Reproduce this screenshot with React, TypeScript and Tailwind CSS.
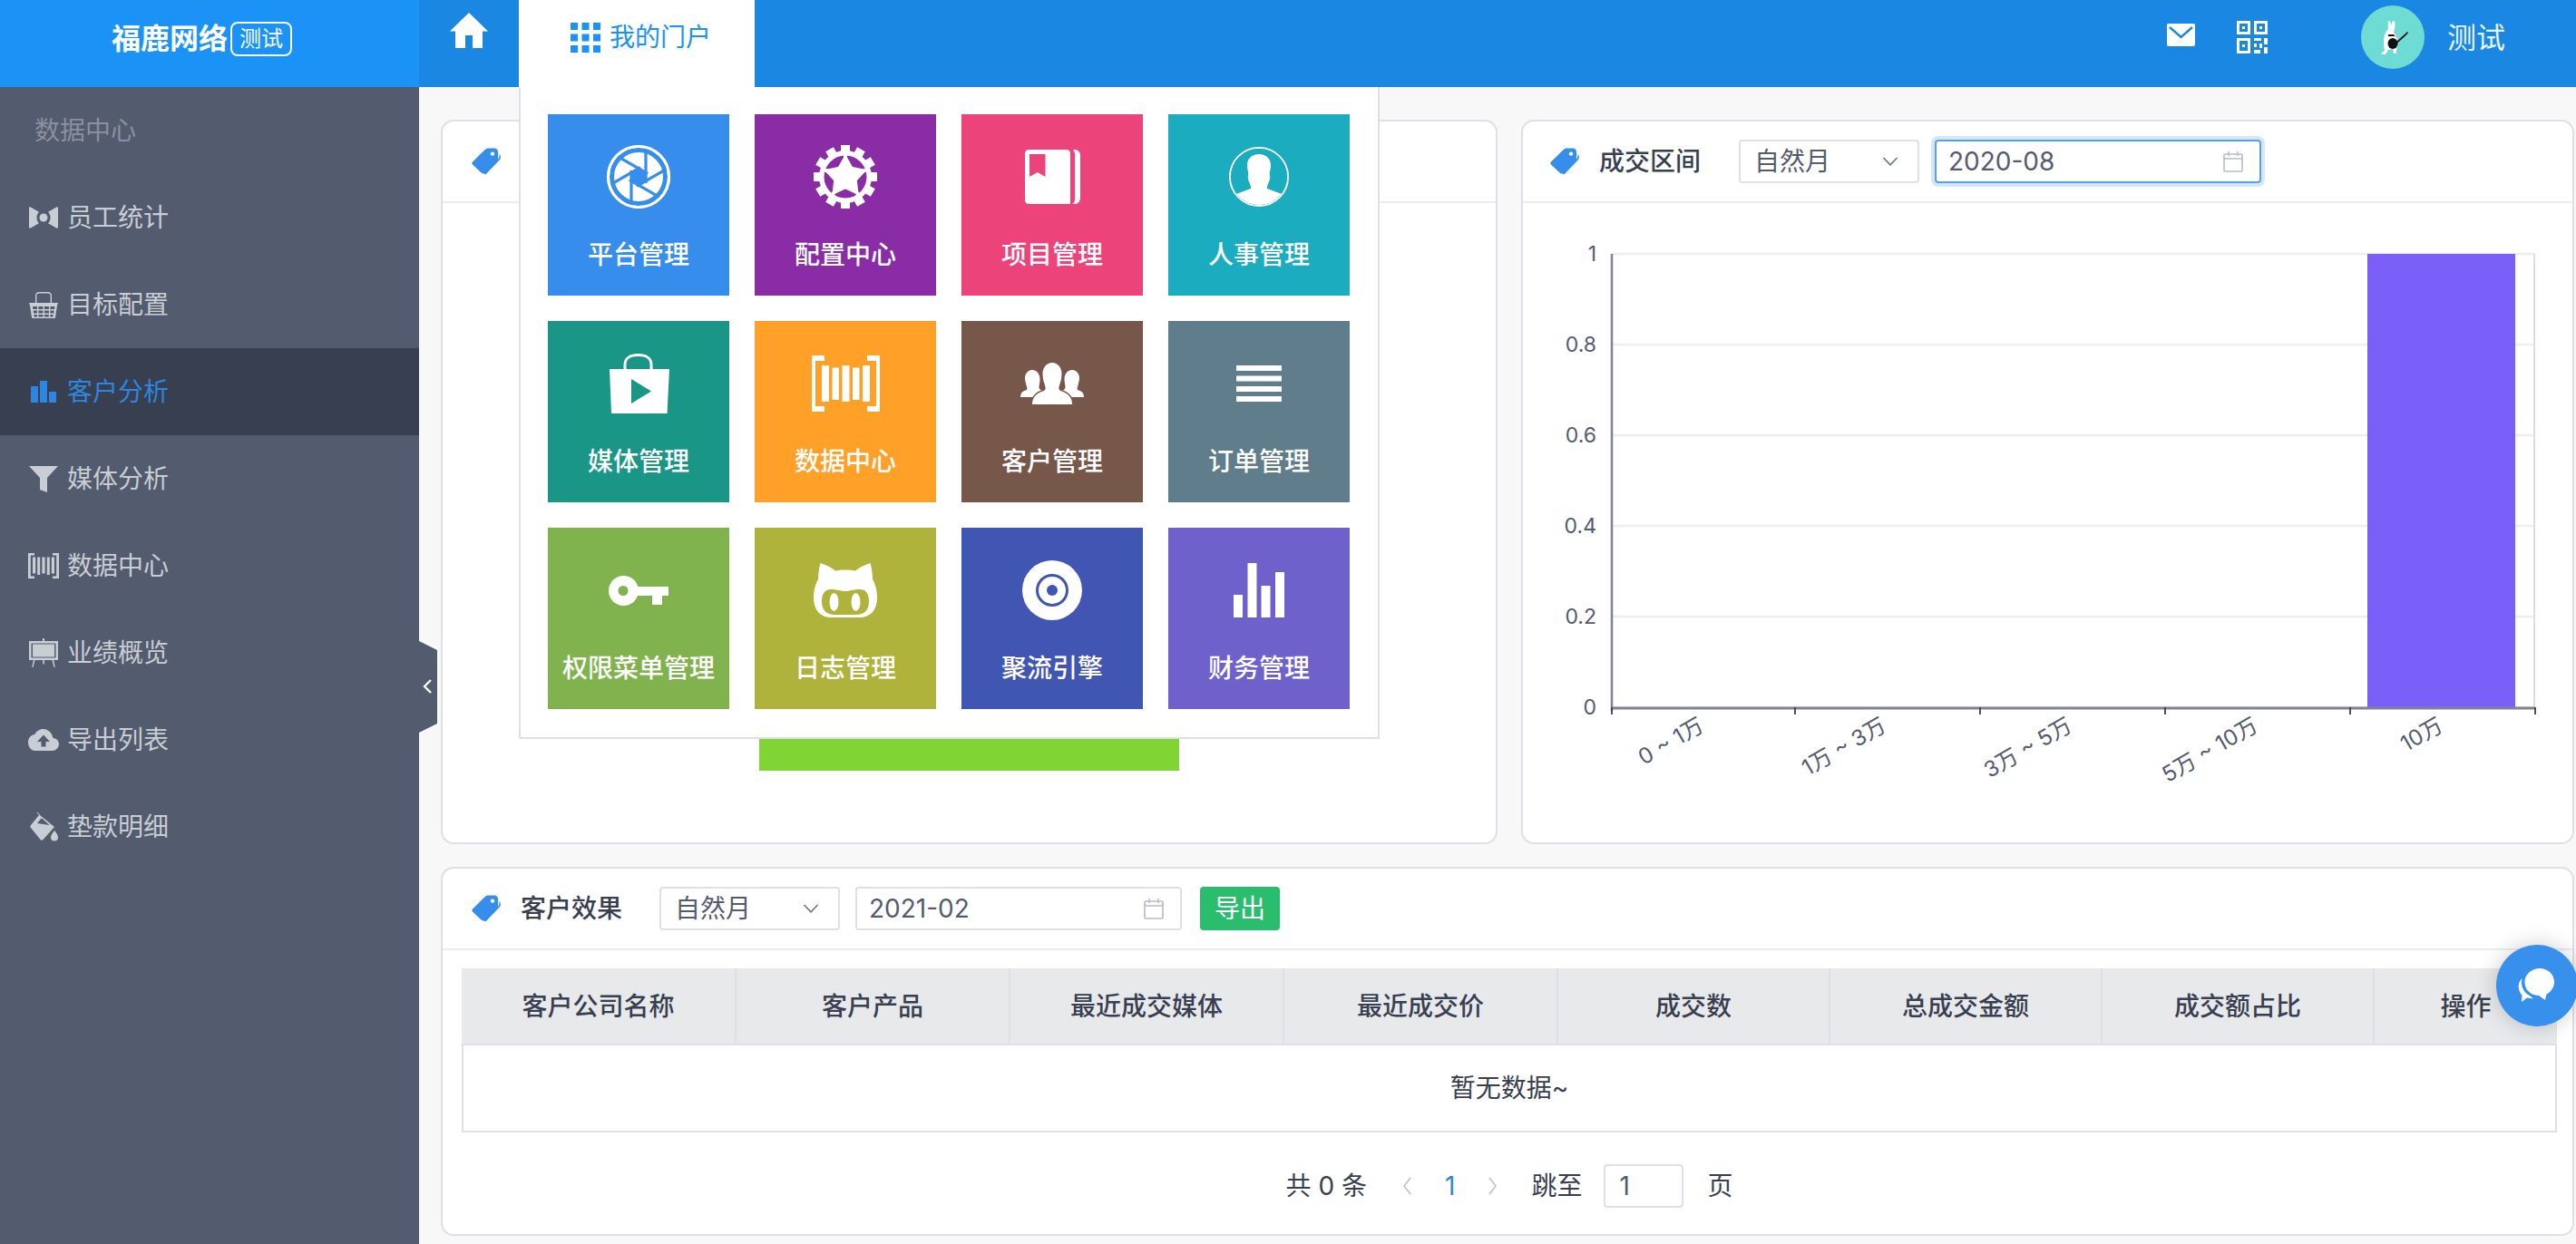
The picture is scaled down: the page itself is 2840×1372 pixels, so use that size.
import React from "react";

const FONT = "font-['Inter','Noto_Sans_CJK_SC',sans-serif]";

const Tag = () => (
  <svg viewBox="0 0 32 30" className="w-[32px] h-[30px] shrink-0">
    <path d="M1 15.5 14.5 2.2C15.6 1.1 17 .6 18.5.6h6.600c2.300 0 4 1.700 4 4v7.400c0 1.200-.5 2.300-1.300 3.100L15.600 27.400c-1.500 1.500-3.500 1.500-5 0L1 18.600c-.9-.9-.9-2.200 0-3.100Z" fill="#368DEB" />
    <circle cx="23" cy="6.600" r="2.200" fill="#fff" />
    <path d="M30.600 7c.9 1 1.300 2 1.300 3.300 0 1.400-.5 2.500-1.500 3.500L15.400 29.600l-2-1.400 15.800-15.600c1-1 1.400-2.600 1.400-5.600Z" fill="#368DEB" />
  </svg>
);

const Chevron = () => (
  <svg viewBox="0 0 18 10" className="w-[18px] h-[10px]" fill="none" stroke="#6b7285" strokeWidth="1.600">
    <path d="M1.500 1 9 8.800 16.500 1" />
  </svg>
);

const Calendar = () => (
  <svg viewBox="0 0 22 24" className="w-[22px] h-[24px]" fill="none" stroke="#b9bcc6" strokeWidth="1.600">
    <rect x="1" y="4" width="20" height="19" rx="1" />
    <path d="M1 9h20M6 1v5M16 1v5" />
  </svg>
);

const Select = () => (
  <div className="w-[199px] h-[48px] shrink-0 flex items-center justify-between pl-[15px] pr-[21px] rounded-[4px] border-2 border-[#dfe0e6] text-[28px] text-[#535b6e]">
    <span>自然月</span>
    <Chevron />
  </div>
);

const DateBox = ({ value, focus }: { value: string; focus?: boolean }) => (
  <div
    className={`w-[360px] h-[48px] shrink-0 flex items-center justify-between pl-[13px] pr-[18px] rounded-[4px] border-2 text-[28px] text-[#535b6e] ${
      focus ? "border-[#5a9fec] shadow-[0_0_0_4px_#d5e7fa]" : "border-[#dfe0e6]"
    }`}
  >
    <span>{value}</span>
    <Calendar />
  </div>
);

const CardHead = ({ title, pad, gap, children }: { title?: string; pad: string; gap: string; children?: React.ReactNode }) => (
  <div className={`h-[90px] shrink-0 flex items-center border-b-2 border-[#ededf0] ${pad}`}>
    <Tag />
    <span className="ml-[22px] text-[28px] font-medium text-[#373f50] w-[112px] shrink-0">{title}</span>
    <div className={`flex items-center gap-[17px] ${gap}`}>{children}</div>
  </div>
);

/* ---------- sidebar icons ---------- */
const SideBowtie = () => (
  <svg viewBox="0 0 32 24" className="w-[32px] h-[24px]" fill="#c9cdd4">
    <path d="M0 1.500C0 .4 1 0 1.800.4L11 5.800c-1.600 1.400-2.500 3.600-2.500 6.200s.9 4.800 2.500 6.200l-9.200 5.400C1 24 0 23.600 0 22.500Z" />
    <path d="M32 1.500c0-1.100-1-1.500-1.800-1.100L21 5.800c1.600 1.400 2.500 3.600 2.500 6.200s-.9 4.800-2.500 6.200l9.200 5.400c.8.400 1.800 0 1.800-1.100Z" />
    <circle cx="16" cy="12" r="4.500" />
  </svg>
);
const SideBasket = () => (
  <svg viewBox="0 0 32 30" className="w-[32px] h-[30px]" fill="#c9cdd4">
    <path d="M7 13V5c0-2.200 1.600-4 4-4h10c2.400 0 4 1.800 4 4v8h-1.400V5c0-1.500-1-2.600-2.600-2.600H11C9.400 2.400 8.400 3.500 8.400 5v8Z" />
    <path fillRule="evenodd" d="M0 13h32l-1 3-2 13c0 .5-.5 1-1 1H4c-.5 0-1-.5-1-1L1 16Zm4 4 .4 3H9v-3Zm6.400 0v3h5v-3Zm6.500 0v3h5v-3Zm6.500 0v3H28l.4-3ZM4.700 21.500l.4 3H9v-3Zm5.700 0v3h5v-3Zm6.500 0v3h5v-3Zm6.500 0v3H27.300l.4-3ZM5.400 26l.3 2.600H9V26Zm5 0v2.600h5V26Zm6.500 0v2.600h5V26Zm6.500 0v2.600H26.400l.3-2.600Z" />
  </svg>
);
const SideBars = () => (
  <svg viewBox="0 0 28 24" className="w-[28px] h-[24px] ml-[2px]" fill="#2f86de">
    <rect x="0" y="6" width="8" height="18" />
    <rect x="10" y="0" width="8" height="24" />
    <rect x="20" y="12" width="8" height="12" />
  </svg>
);
const SideFunnel = () => (
  <svg viewBox="0 0 32 29" className="w-[32px] h-[29px]" fill="#c9cdd4">
    <path d="M0 0h32L20 13v16l-8-3V13Z" />
  </svg>
);
const SideBarcode = () => (
  <svg viewBox="0 0 34 28" className="w-[34px] h-[28px] -ml-[1px]" fill="#c9cdd4">
    <path d="M0 0h7v2.400H2.800v23.200H7V28H0ZM34 0h-7v2.400h4.200v23.200H27V28h7Z" />
    <rect x="5" y="4.500" width="3.200" height="18" />
    <rect x="10.200" y="4.500" width="3" height="19.500" />
    <rect x="15.400" y="4.500" width="3.200" height="18" />
    <rect x="20.800" y="4.500" width="3" height="19.500" />
    <rect x="25.800" y="4.500" width="3.200" height="18" />
  </svg>
);
const SideEasel = () => (
  <svg viewBox="0 0 32 32" className="w-[32px] h-[32px]" fill="#c9cdd4">
    <rect x="15" y="0" width="2" height="3" />
    <path fillRule="evenodd" d="M0 3h32v21H0Zm2.500 2.500v16h27v-16Z" />
    <rect x="4" y="6.500" width="24" height="14" />
    <path d="M5 24h1.600l-2 7.800H3.200ZM25.400 24H27l1.800 7.800h-1.400ZM15.200 24h1.600v4.500h-1.600Z" />
  </svg>
);
const SideCloud = () => (
  <svg viewBox="0 0 34 24" className="w-[34px] h-[24px] -ml-[1px]">
    <path d="M27.500 10C26.400 4.200 21.800 0 16.800 0 12.600 0 9 2.400 7.300 5.900 3 6.400 0 10 0 14.600 0 19.800 3.400 24 7.600 24h18.800C30.600 24 34 20.800 34 16.500c0-3.600-2.800-6.200-6.500-6.500Z" fill="#c9cdd4" />
    <path d="M17 6.500 24 14h-4.500v5.500h-5V14H10Z" fill="#535b6e" />
  </svg>
);
const SideBucket = () => (
  <svg viewBox="0 0 32 32" className="w-[32px] h-[32px]" fill="#c9cdd4">
    <path d="M8.500 0 11 3 2 14c-.8 1-.8 2 0 3l10.500 13c.8 1 2.200 1 3 0L28 16 12.500 3.500l-.1-.1L9.800 0Z" />
    <path d="M9 12l4.800-5.800L22.700 14Z" fill="#535b6e" />
    <path d="M28 20s4 4.500 4 7.500a4 4 0 0 1-8 0c0-3 4-7.500 4-7.500Z" />
  </svg>
);

/* ---------- tile icons ---------- */
const Aperture = ({ c }: { c: string }) => (
  <svg viewBox="0 0 70 70" className="w-[70px] h-[70px]">
    <circle cx="35" cy="35" r="35" fill="#fff" />
    <circle cx="35" cy="35" r="27" fill="#fff" />
    {[0, 60, 120, 180, 240, 300].map((a) => (
      <line key={a} x1="43" y1="42" x2="43" y2="2" stroke={c} strokeWidth="3.200" transform={`rotate(${a} 35 35)`} />
    ))}
    <path d="M35 26 42.800 30.500v9L35 44l-7.800-4.500v-9Z" fill={c} />
    <circle cx="35" cy="35" r="29.500" fill="none" stroke={c} strokeWidth="5" />
    <circle cx="35" cy="35" r="33.500" fill="none" stroke="#fff" strokeWidth="3" />
  </svg>
);

const starPoints = (() => {
  const pts: string[] = [];
  for (let i = 0; i < 10; i++) {
    const r = i % 2 === 0 ? 25 : 13.5;
    const t = (Math.PI / 5) * i - Math.PI / 2;
    pts.push(`${(35 + r * Math.cos(t)).toFixed(2)},${(35 + r * Math.sin(t)).toFixed(2)}`);
  }
  return pts.join(" ");
})();

const Gear = ({ c }: { c: string }) => (
  <svg viewBox="0 0 70 70" className="w-[70px] h-[70px]">
    {[0, 30, 60, 90, 120, 150].map((a) => (
      <rect key={a} x="30" y="0" width="10" height="70" fill="#fff" transform={`rotate(${a} 35 35)`} />
    ))}
    <circle cx="35" cy="35" r="29" fill="#fff" />
    <circle cx="35" cy="35" r="23.500" fill={c} />
    <polygon points={starPoints} fill="#fff" />
    {[0, 72, 144, 216, 288].map((a) => (
      <rect key={a} x="33" y="8" width="4" height="20" fill="#fff" transform={`rotate(${a} 35 35)`} />
    ))}
  </svg>
);
const Notebook = ({ c }: { c: string }) => (
  <svg viewBox="0 0 70 70" className="w-[70px] h-[70px]">
    <path d="M5 9c0-2.200 1.800-4 4-4h42c2.200 0 4 1.800 4 4v56H9c-2.200 0-4-1.800-4-4Z" fill="#fff" />
    <path d="M57 5h3c3.300 0 6 2.700 6 6v48c0 3.300-2.700 6-6 6h-3c2-.8 3-2.500 3-5V10c0-2.500-1-4.200-3-5Z" fill="#fff" />
    <path d="M10 10h17.500v25L18.800 30 10 35Z" fill={c} />
  </svg>
);
const Person = ({ c }: { c: string }) => (
  <svg viewBox="0 0 70 70" className="w-[70px] h-[70px]">
    <circle cx="35" cy="35" r="32" fill="none" stroke="#fff" strokeWidth="2" />
    <clipPath id="person-clip">
      <circle cx="35" cy="35" r="31" />
    </clipPath>
    <g clipPath="url(#person-clip)">
      <rect width="70" height="70" fill={c} />
      <path
        d="M35 10C43 10 48 15 48 22 48 28 46 30 47 34 48 38 45 41 44 46V48L63 55V70H7V55L26 48V46C25 41 22 38 23 34 24 30 22 28 22 22 22 15 27 10 35 10Z"
        fill="#fff"
      />
    </g>
  </svg>
);
const Bag = ({ c }: { c: string }) => (
  <svg viewBox="0 0 70 70" className="w-[70px] h-[70px]">
    <path d="M20 19V14C20 7 26 3.500 34.500 3.500S49 7 49 14V19" fill="none" stroke="#fff" strokeWidth="3" />
    <path d="M3 19h66l-2.500 49H5Z" fill="#fff" />
    <path d="M27 30v27l22-13.500Z" fill={c} />
  </svg>
);
const BarcodeL = () => (
  <svg viewBox="0 0 75 62" className="w-[75px] h-[62px]" fill="#fff">
    <path d="M0 0h14v6H4v50h10v6H0ZM75 0H61v6h10v50H61v6h14Z" />
    <rect x="11" y="11" width="8" height="40" />
    <rect x="22.500" y="13.500" width="7.500" height="35.500" />
    <rect x="33.500" y="11" width="8" height="40" />
    <rect x="45" y="13.500" width="7.500" height="35.500" />
    <rect x="56" y="11" width="8" height="40" />
  </svg>
);
const Group = ({ c }: { c: string }) => {
  const side =
    "M13 8C17.500 8 21.500 12 21.500 18 21.500 22 20.500 25 20.500 27 20.500 29 22 30 24 31V38H0C0 33 3 31 7 30 8 28 7 27 6.500 25 6 22 5 20 5 17 5 12 8.500 8 13 8Z";
  const main =
    "M35 0C41 0 45.500 5 45.500 12 45.500 18 44 22 43 25 42 28 42 29 44 31 50 33 57 36 57 46H13C13 36 20 33 26 31 28 29 28 28 27 25 26 22 24.500 18 24.500 12 24.500 5 29 0 35 0Z";
  return (
    <svg viewBox="0 0 70 46" className="w-[70px] h-[46px]" fill="#fff">
      <path d={side} />
      <path d={side} transform="translate(70 0) scale(-1 1)" />
      <path d={main} stroke={c} strokeWidth="3" paintOrder="stroke" />
    </svg>
  );
};
const Lines = () => (
  <svg viewBox="0 0 50 40" className="w-[50px] h-[40px]" fill="#fff">
    <rect y="0" width="50" height="6" />
    <rect y="11.500" width="50" height="6" />
    <rect y="23" width="50" height="6" />
    <rect y="34" width="50" height="6" />
  </svg>
);
const Key = ({ c }: { c: string }) => (
  <svg viewBox="0 0 66 33" className="w-[66px] h-[33px]">
    <circle cx="16.500" cy="16.500" r="16.500" fill="#fff" />
    <path d="M28 12H66V22H59V32H48V22H28Z" fill="#fff" />
    <circle cx="16" cy="16.500" r="5.500" fill={c} />
  </svg>
);
const Cat = ({ c }: { c: string }) => (
  <svg viewBox="0 0 70 60" className="w-[70px] h-[60px]">
    <path d="M7.500 0C14 2 20 5 24 8.500 28 7 42 7 46 8.500 50 5 56 2 62.500 0 64 5 65 12 65 18 68 23 70 30 70 38 70 52 63 60 50 60H20C7 60 0 52 0 38 0 30 2 23 5 18 5 12 6 5 7.500 0Z" fill="#fff" />
    <path d="M9 42C9 33 13 29 19 29 26 29 30 31 35 31S44 29 51 29C57 29 61 33 61 42 61 52 56 57 46 57H24C14 57 9 52 9 42Z" fill={c} />
    <ellipse cx="22.500" cy="43" rx="5" ry="10" fill="#fff" />
    <ellipse cx="46.500" cy="43" rx="5" ry="10" fill="#fff" />
  </svg>
);
const Target = ({ c }: { c: string }) => (
  <svg viewBox="0 0 66 66" className="w-[66px] h-[66px]">
    <circle cx="33" cy="33" r="33" fill="#fff" />
    <circle cx="33" cy="33" r="18" fill={c} />
    <circle cx="33" cy="33" r="15" fill="#fff" />
    <circle cx="33" cy="33" r="6" fill={c} />
  </svg>
);
const TileBars = () => (
  <svg viewBox="0 0 56 60" className="w-[56px] h-[60px]" fill="#fff">
    <rect x="0" y="35" width="10" height="25" />
    <rect x="15.500" y="0" width="10" height="60" />
    <rect x="30.500" y="25" width="10" height="35" />
    <rect x="46" y="10" width="10" height="50" />
  </svg>
);

const tiles: { name: string; bg: string; icon: React.ReactNode }[] = [
  { name: "平台管理", bg: "bg-[#368deb]", icon: <Aperture c="#368deb" /> },
  { name: "配置中心", bg: "bg-[#8a2ca5]", icon: <Gear c="#8a2ca5" /> },
  { name: "项目管理", bg: "bg-[#ed437b]", icon: <Notebook c="#ed437b" /> },
  { name: "人事管理", bg: "bg-[#1cacbf]", icon: <Person c="#1cacbf" /> },
  { name: "媒体管理", bg: "bg-[#199686]", icon: <Bag c="#199686" /> },
  { name: "数据中心", bg: "bg-[#ffa028]", icon: <BarcodeL /> },
  { name: "客户管理", bg: "bg-[#78574b]", icon: <Group c="#78574b" /> },
  { name: "订单管理", bg: "bg-[#607d8b]", icon: <Lines /> },
  { name: "权限菜单管理", bg: "bg-[#80b34d]", icon: <Key c="#80b34d" /> },
  { name: "日志管理", bg: "bg-[#afb23b]", icon: <Cat c="#afb23b" /> },
  { name: "聚流引擎", bg: "bg-[#4155b3]", icon: <Target c="#4155b3" /> },
  { name: "财务管理", bg: "bg-[#6e61cc]", icon: <TileBars /> },
];

const sideItems: { name: string; icon: React.ReactNode; active?: boolean }[] = [
  { name: "员工统计", icon: <SideBowtie /> },
  { name: "目标配置", icon: <SideBasket /> },
  { name: "客户分析", icon: <SideBars />, active: true },
  { name: "媒体分析", icon: <SideFunnel /> },
  { name: "数据中心", icon: <SideBarcode /> },
  { name: "业绩概览", icon: <SideEasel /> },
  { name: "导出列表", icon: <SideCloud /> },
  { name: "垫款明细", icon: <SideBucket /> },
];

const columns: [string, string][] = [
  ["客户公司名称", "w-[303px]"],
  ["客户产品", "w-[302px]"],
  ["最近成交媒体", "w-[302px]"],
  ["最近成交价", "w-[302px]"],
  ["成交数", "w-[300px]"],
  ["总成交金额", "w-[300px]"],
  ["成交额占比", "w-[300px]"],
  ["操作", "w-[201px]"],
];

const Chart = () => {
  const left = 98;
  const right = 1115;
  const top = 17;
  const bottom = 517;
  const ys: [number, string][] = [
    [1, "1"],
    [0.8, "0.8"],
    [0.6, "0.6"],
    [0.4, "0.4"],
    [0.2, "0.2"],
    [0, "0"],
  ];
  const ticks = [98, 300, 504, 708, 912, 1116];
  const labels: [number, string][] = [
    [201, "0 ~ 1万"],
    [402, "1万 ~ 3万"],
    [607, "3万 ~ 5万"],
    [812, "5万 ~ 10万"],
    [1016, "10万"],
  ];
  const fam = "Inter, 'Noto Sans CJK SC', sans-serif";
  return (
    <svg viewBox="0 0 1159 640" className="w-[1159px] h-[640px] block">
      {ys.map(([v]) => {
        const y = bottom - (bottom - top) * v;
        return <line key={v} x1={left} x2={right} y1={y} y2={y} stroke="#eeeef0" strokeWidth="2.500" />;
      })}
      <line x1={right} x2={right} y1={top} y2={bottom} stroke="#dcdde1" strokeWidth="2" />
      <rect x="931" y={top} width="163" height={bottom - top} fill="#7a5ff8" />
      <line x1={left} x2={left} y1={top} y2={bottom + 4} stroke="#7f8299" strokeWidth="2.500" />
      <line x1={left} x2={right + 1} y1={bottom + 1} y2={bottom + 1} stroke="#7f8299" strokeWidth="3" />
      {ticks.map((t) => (
        <line key={t} x1={t} x2={t} y1={bottom} y2={bottom + 8} stroke="#3a3f4e" strokeWidth="1.800" />
      ))}
      {ys.map(([v, l]) => {
        const y = bottom - (bottom - top) * v;
        return (
          <text key={l} x={81} y={y + 8} textAnchor="end" fontSize="23" fill="#535b6e" fontFamily={fam}>
            {l}
          </text>
        );
      })}
      {labels.map(([x, l]) => (
        <text key={l} textAnchor="end" fontSize="24" fill="#535b6e" fontFamily={fam} transform={`translate(${x} ${bottom + 25}) rotate(-30)`}>
          {l}
        </text>
      ))}
    </svg>
  );
};

export default function App() {
  return (
    <div className={`relative w-[2840px] h-[1372px] overflow-hidden bg-[#f8f8f8] flex flex-col ${FONT}`}>
      {/* top bar */}
      <header className="h-[96px] shrink-0 flex bg-[#1a88e2]">
        <div className="w-[462px] h-[96px] shrink-0 bg-[#1b92f5] flex pt-[24px] pl-[123px] text-white">
          <span className="text-[32px] leading-[38px] font-bold w-[131px]">福鹿网络</span>
          <span className="w-[68px] h-[38px] rounded-[8px] border-2 border-white flex items-center justify-center text-[24px] leading-none">测试</span>
        </div>
        <div className="w-[110px] flex justify-center pt-[14px]">
          <svg viewBox="0 0 42 39" className="w-[42px] h-[39px]" fill="#fff">
            <path d="M21 0 42 20.500h-6V39H25V25h-8v14H6V20.500H0Z" />
          </svg>
        </div>
        <div className="w-[260px]" />
        <div className="flex-1" />
        <div className="flex items-start">
          <svg viewBox="0 0 31 25" className="w-[31px] h-[25px] mt-[26px]">
            <rect width="31" height="25" rx="2" fill="#fff" />
            <path d="M3 4l12.500 11L28 4" fill="none" stroke="#1a88e2" strokeWidth="2.400" />
          </svg>
          <svg viewBox="0 0 34 36" className="w-[34px] h-[36px] mt-[23px] ml-[46px]" fill="#fff">
            <path fillRule="evenodd" d="M0 0h15v15H0Zm3 3v9h9V3ZM19 0h15v15H19Zm3 3v9h9V3ZM0 19h15v17H0Zm3 3v11h9V22Z" />
            <rect x="6" y="6" width="3" height="3" />
            <rect x="25" y="6" width="3" height="3" />
            <rect x="6" y="26" width="3" height="3" />
            <path d="M19 19h8v3h-8ZM30 19h4v7h-4ZM19 25h3v4h-3ZM25 25h3v5h-3ZM19 32h7v4h-7ZM30 29h4v7h-4Z" />
          </svg>
          <div className="w-[70px] h-[70px] mt-[6px] ml-[103px] rounded-full bg-[#6edcd3] shrink-0">
            <svg viewBox="0 0 70 70" className="w-[70px] h-[70px]">
              <path d="M31 17c1.500 0 2 3 2 7 .5-4 1.500-7 3-7s2 4 1 9l-1 4c2.500 2 4 5 4 9 0 5-1 9-1 14h-3l-1-5-5 1-3 5h-5c.5-2 2.500-3 4-4l-1-6c-.5-8 1-14 5-18-.3-4-.5-9 1-9Z" fill="#fff" />
              <ellipse cx="35" cy="42" rx="5.500" ry="6" fill="#111" />
              <path d="M30 32h6l2 2h-8Z" fill="#111" />
              <path d="M36.500 33.500l1.500-1.500 2.500 1.500-2 2Z" fill="#f3b6c4" />
              <path d="M38 41 49 31l2-2 1 1-2 2.500-11 10Z" fill="#111" />
            </svg>
          </div>
          <span className="ml-[25px] mr-[78px] mt-[22px] text-[32px] leading-[40px] text-[#e8f3fd]">测试</span>
        </div>
      </header>

      {/* body */}
      <div className="flex-1 flex min-h-0">
        <aside className="w-[462px] shrink-0 bg-[#535b6e]">
          <div className="h-[96px] flex items-center pl-[38px] text-[28px] text-[#8b909e]">数据中心</div>
          {sideItems.map((it) => (
            <div key={it.name} className={`h-[96px] flex items-center ${it.active ? "bg-[#373f50] text-[#2f86de]" : "text-[#c9cdd4]"} text-[28px]`}>
              <div className="w-[74px] pl-[32px] flex shrink-0">{it.icon}</div>
              <span>{it.name}</span>
            </div>
          ))}
        </aside>

        <main className="flex-1 min-w-0 pl-[24px] pt-[36px] flex flex-col gap-[25px]">
          <div className="flex gap-[26px] h-[799px] shrink-0">
            <section className="w-[1165px] shrink-0 bg-white rounded-[14px] border-2 border-[#dfe0e6] flex flex-col">
              <CardHead title="" pad="pl-[32px]" gap="ml-[41px]" />
              <div className="flex-1 flex flex-col items-center">
                <div className="h-[536px] w-full shrink-0" />
                <div className="w-[463px] h-[90px] shrink-0 bg-[#80d433]" />
              </div>
            </section>
            <section className="w-[1161px] shrink-0 bg-white rounded-[14px] border-2 border-[#dfe0e6] flex flex-col overflow-hidden">
              <CardHead title="成交区间" pad="pl-[30px]" gap="ml-[42px]">
                <Select />
                <DateBox value="2020-08" focus />
              </CardHead>
              <div className="pt-[39px]">
                <Chart />
              </div>
            </section>
          </div>

          <section className="w-[2352px] h-[407px] shrink-0 bg-white rounded-[14px] border-2 border-[#dfe0e6] flex flex-col">
            <CardHead title="客户效果" pad="pl-[32px]" gap="ml-[41px]">
              <Select />
              <DateBox value="2021-02" />
              <div className="w-[88px] h-[48px] ml-[3px] rounded-[4px] bg-[#2bbd6e] text-white text-[28px] flex items-center justify-center">导出</div>
            </CardHead>
            <div className="pl-[21px] pr-[17px] pt-[20px]">
              <div className="flex h-[85px] bg-[#e8e9eb] border-b-2 border-[#dfe0e6]">
                {columns.map(([c, w], i) => (
                  <div
                    key={c}
                    className={`${w} shrink-0 flex items-center justify-center text-[28px] font-medium text-[#373f50] ${i < 7 ? "border-r-2 border-[#dfe0e6]" : ""}`}
                  >
                    {c}
                  </div>
                ))}
              </div>
              <div className="h-[96px] flex items-center justify-center text-[28px] text-[#373f50] border-x-2 border-b-2 border-[#dfe0e6]">暂无数据~</div>
              <div className="mt-[35px] flex items-center justify-center text-[28px] text-[#373f50] h-[48px]">
                <span>共 0 条</span>
                <svg viewBox="0 0 12 22" className="w-[12px] h-[22px] ml-[38px]" fill="none" stroke="#c2c5cc" strokeWidth="1.800">
                  <path d="M10 2 3 11l7 9" />
                </svg>
                <span className="ml-[36px] text-[#2f86de]">1</span>
                <svg viewBox="0 0 12 22" className="w-[12px] h-[22px] ml-[36px]" fill="none" stroke="#c2c5cc" strokeWidth="1.800">
                  <path d="M2 2l7 9-7 9" />
                </svg>
                <span className="ml-[36px]">跳至</span>
                <div className="w-[88px] h-[48px] ml-[24px] pl-[15px] rounded-[4px] border-2 border-[#dfe0e6] flex items-center text-[#535b6e]">1</div>
                <span className="ml-[26px]">页</span>
              </div>
            </div>
          </section>
        </main>
      </div>

      {/* collapse handle */}
      <div className="absolute left-[462px] top-[707px]">
        <svg viewBox="0 0 20 101" className="w-[20px] h-[101px]">
          <path d="M0 0 20 10v81L0 101Z" fill="#535b6e" />
          <path d="M13 43 6 50l7 7" fill="none" stroke="#fff" strokeWidth="2.400" />
        </svg>
      </div>

      {/* portal dropdown */}
      <div className="absolute left-[572px] top-0">
        <div className="w-[260px] h-[96px] bg-white flex items-start pl-[57px] pt-[25px]">
          <svg viewBox="0 0 33 33" className="w-[33px] h-[33px]" fill="#1b92f5">
            {[0, 12.5, 25].map((y) => [0, 12.5, 25].map((x) => <rect key={`${x}-${y}`} x={x} y={y} width="8" height="8" />))}
          </svg>
          <span className="ml-[10px] -mt-[4px] text-[28px] leading-[40px] text-[#1b92f5]">我的门户</span>
        </div>
        <div className="w-[949px] h-[719px] bg-white border-2 border-t-0 border-[#dfe0e6] pl-[30px] pt-[30px] grid grid-cols-[repeat(4,200px)] auto-rows-[200px] gap-[28px]">
          {tiles.map((t) => (
            <div key={t.name} className={`${t.bg} w-[200px] h-[200px] flex flex-col items-center text-white pt-[34px]`}>
              <div className="h-[70px] w-full flex items-center justify-center">{t.icon}</div>
              <span className="text-[28px] leading-[28px] mt-[37px] font-medium">{t.name}</span>
            </div>
          ))}
        </div>
      </div>

      {/* chat bubble */}
      <div className="absolute left-[2752px] top-[1042px] w-[90px] h-[90px] rounded-full bg-[#3790ec] shadow-[0_0_24px_rgba(0,0,0,0.2)] flex items-center justify-center">
        <svg viewBox="0 0 40 38" className="w-[40px] h-[38px] -ml-[2px]" fill="#fff">
          <path d="M24 0c9 0 16 6.500 16 15 0 6-3.500 11-8.500 13.500L30 35l-7-5c-9 0-15.500-6.500-15.500-15S15 0 24 0Z" />
          <path d="M4.500 11C1.500 14 0 18 1 23c.5 3 2 5 3.500 6.500L4 37l6-4.500 7 1-4-3.500C8 28 4 22 4 16Z" />
        </svg>
      </div>
    </div>
  );
}
